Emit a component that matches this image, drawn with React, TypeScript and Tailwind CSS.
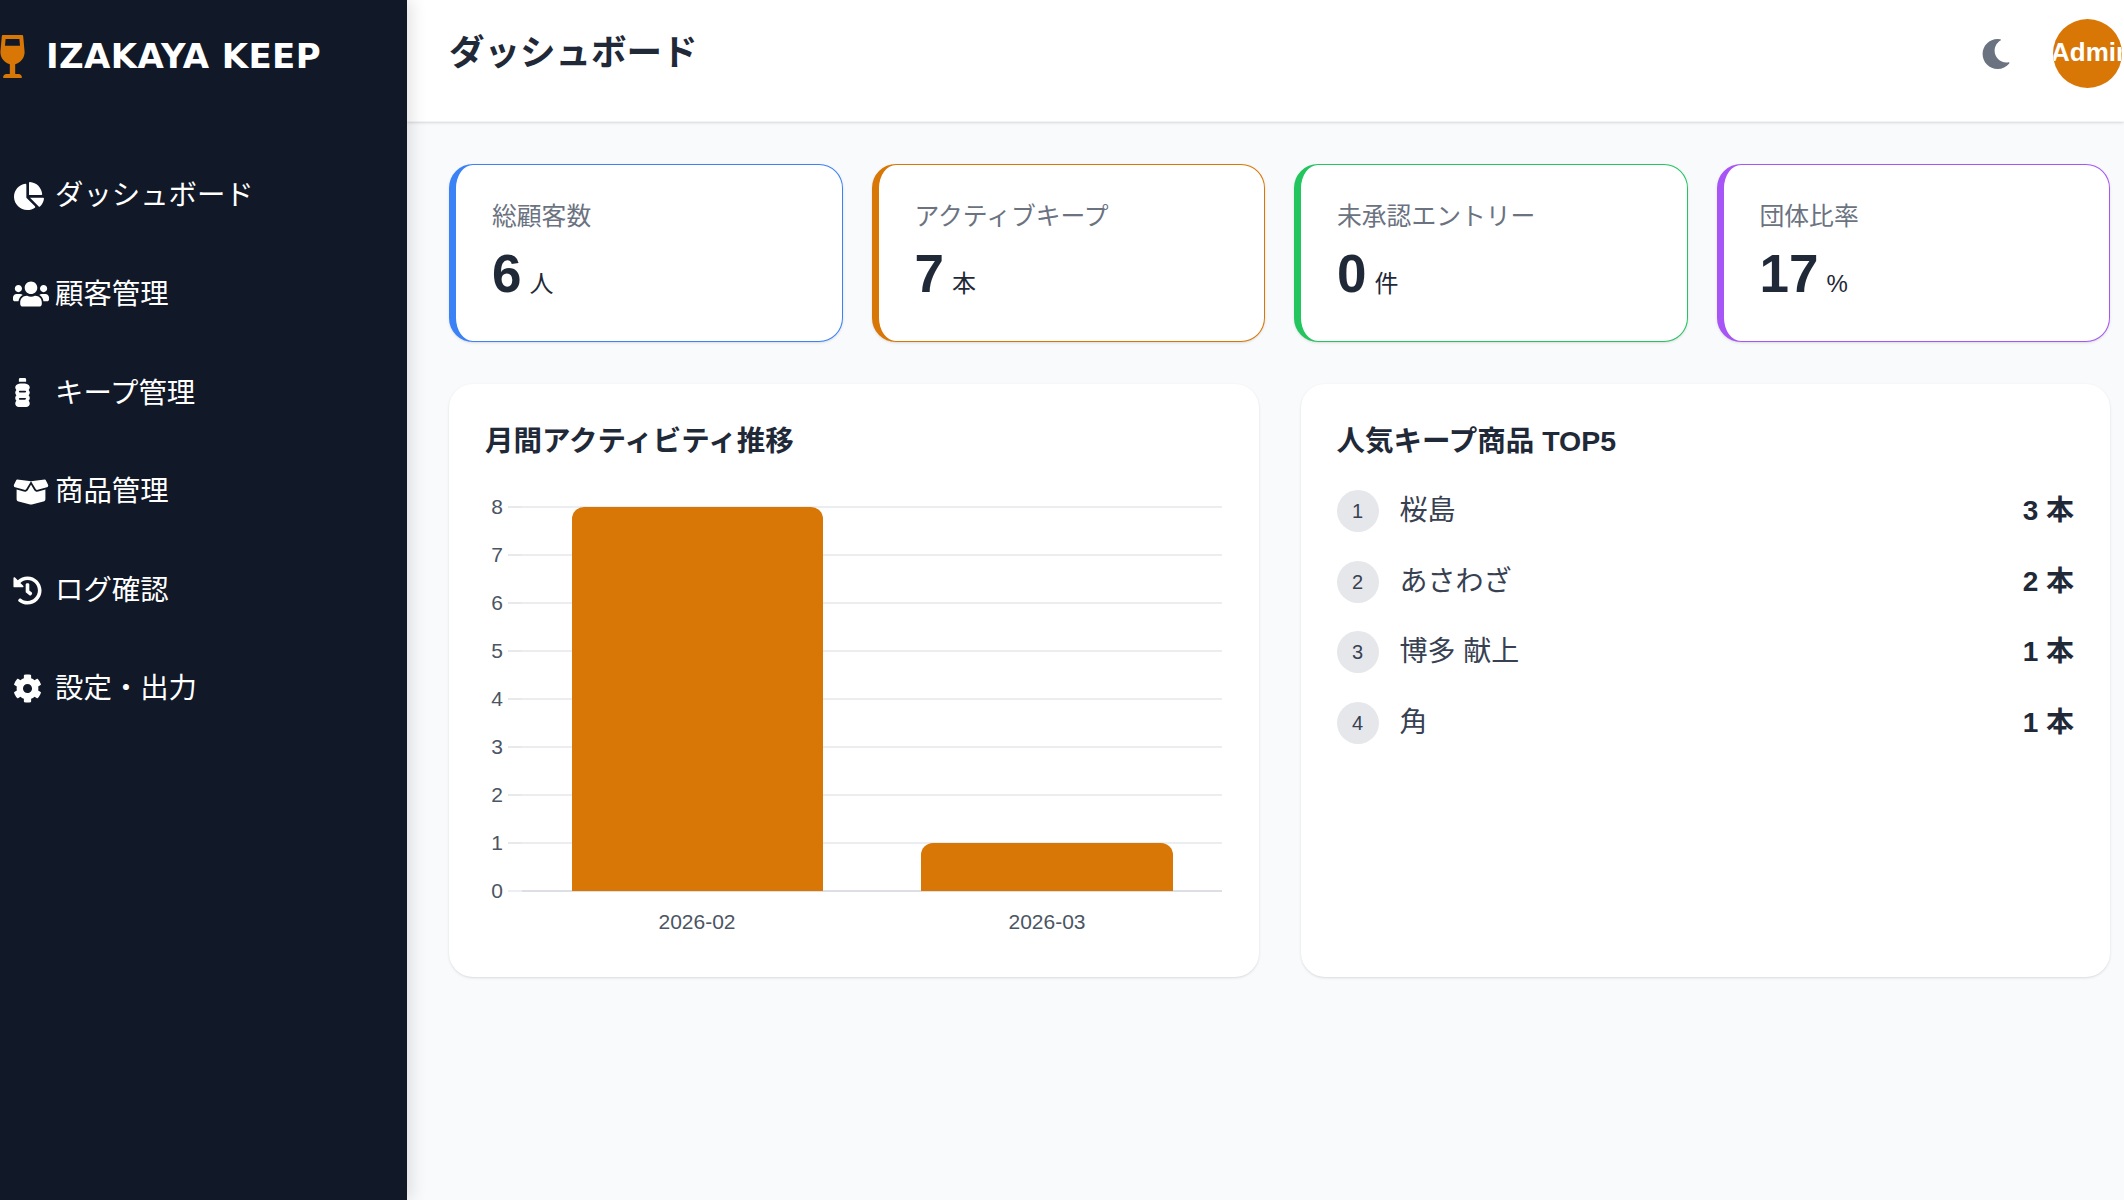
import { FaBottleWater, FaBoxOpen } from 'react-icons/fa6';
import { FaChartPie, FaCog, FaHistory, FaMoon, FaUsers, FaWineGlassAlt } from 'react-icons/fa';

const nav = [
  { label: 'ダッシュボード', icon: FaChartPie, cls: 'w-[30px] h-[30px] ml-[1px]' },
  { label: '顧客管理', icon: FaUsers, cls: 'w-[36px] h-[36px]' },
  { label: 'キープ管理', icon: FaBottleWater, cls: 'w-[29px] h-[29px] -ml-[5px]' },
  { label: '商品管理', icon: FaBoxOpen, cls: 'w-[36px] h-[36px]' },
  { label: 'ログ確認', icon: FaHistory, cls: 'w-[29px] h-[29px]' },
  { label: '設定・出力', icon: FaCog, cls: 'w-[29px] h-[29px]' },
];

const stats = [
  { label: '総顧客数', value: '6', unit: '人', border: 'border-[#3b82f6]' },
  { label: 'アクティブキープ', value: '7', unit: '本', border: 'border-[#d97706]' },
  { label: '未承認エントリー', value: '0', unit: '件', border: 'border-[#22c55e]' },
  { label: '団体比率', value: '17', unit: '%', border: 'border-[#a855f7]' },
];

const ranking = [
  { name: '桜島', count: '3 本' },
  { name: 'あさわざ', count: '2 本' },
  { name: '博多 献上', count: '1 本' },
  { name: '角', count: '1 本' },
];

const font = "font-['Liberation_Sans','Noto_Sans_CJK_JP',sans-serif]";

function Chart() {
  const ticks = [0, 1, 2, 3, 4, 5, 6, 7, 8];
  const y = (v: number) => 396 - v * 48;
  return (
    <svg width="737" height="445" className="block" fontFamily="'Liberation Sans', sans-serif" fontSize="21">
      {ticks.map((t) => (
        <g key={t}>
          <line x1={t === 0 ? 37 : 23} x2={737} y1={y(t)} y2={y(t)} stroke={t === 0 ? '#d1d5db' : '#e5e7eb'} strokeWidth="1.4" />
          <line x1={23} x2={37} y1={y(t)} y2={y(t)} stroke="#e5e7eb" strokeWidth="1.4" />
          <text x={18} y={y(t) + 7} textAnchor="end" fill="#4b5563">{t}</text>
        </g>
      ))}
      <path d={`M87 ${y(0)} V${y(8) + 12} a12 12 0 0 1 12 -12 H326 a12 12 0 0 1 12 12 V${y(0)} Z`} fill="#d97706" />
      <path d={`M436 ${y(0)} V${y(1) + 12} a12 12 0 0 1 12 -12 H676 a12 12 0 0 1 12 12 V${y(0)} Z`} fill="#d97706" />
      <text x={212} y={434} textAnchor="middle" fill="#4b5563">2026-02</text>
      <text x={562} y={434} textAnchor="middle" fill="#4b5563">2026-03</text>
    </svg>
  );
}

export default function App() {
  return (
    <div className={`flex h-screen overflow-hidden bg-[#f9fafb] ${font}`}>
      {/* Sidebar */}
      <aside className="w-[407px] shrink-0 bg-[#111827] text-white shadow-[4px_0_16px_rgba(0,0,0,0.12)] z-10">
        <div className="flex items-center h-[112px] gap-[12px]">
          <FaWineGlassAlt className="text-[#d97706] w-[43px] h-[43px] -ml-[9px] shrink-0" />
          <span className="font-['DejaVu_Sans'] font-bold text-[34px] tracking-[0.4px]">IZAKAYA KEEP</span>
        </div>
        <nav className="pt-[34.5px]">
          {nav.map((item) => (
            <div key={item.label} className="flex items-center h-[98.6px] pl-[13px] text-[28.4px]">
              <span className="w-[42px] shrink-0">
                <item.icon className={item.cls} />
              </span>
              {item.label}
            </div>
          ))}
        </nav>
      </aside>

      <main className="flex-1 min-w-0">
        {/* Header */}
        <header className="flex items-center justify-between h-[122px] pb-[14px] pl-[42px] pr-[2px] bg-white border-b border-[#f3f4f6] shadow-sm">
          <h1 className="text-[35.5px] font-bold text-[#1f2937]">ダッシュボード</h1>
          <div className="flex items-center gap-[42px]">
            <FaMoon className="w-[30px] h-[30px] text-[#6b7280]" />
            <div className="w-[69px] h-[69px] rounded-full bg-[#d97706] text-white font-bold text-[26px] leading-[67px] overflow-hidden">
              <span className="-ml-[2px]">Admin</span>
            </div>
          </div>
        </header>

        <div className="pl-[42px] pr-[14px] pt-[42px]">
          {/* Stat cards */}
          <div className="grid grid-cols-4 gap-[29px]">
            {stats.map((s) => (
              <div key={s.label} className={`h-[178px] rounded-[24px] bg-white border border-l-[7px] pl-[36px] pt-[34px] shadow-sm ${s.border}`}>
                <p className="text-[24.8px] leading-[35px] text-[#6b7280]">{s.label}</p>
                <p className="mt-[8px] text-[#1f2937] leading-[64px]">
                  <span className="text-[53px] font-bold">{s.value}</span>
                  <span className="text-[24px] ml-[8px]">{s.unit}</span>
                </p>
              </div>
            ))}
          </div>

          {/* Lower panels */}
          <div className="grid grid-cols-2 gap-[42px] mt-[42px]">
            <section className="h-[593px] rounded-[24px] bg-white shadow-sm px-[36px] pt-[37px]">
              <h2 className="text-[28.5px] leading-[40px] font-bold text-[#1f2937]">月間アクティビティ推移</h2>
              <div className="mt-[34px]">
                <Chart />
              </div>
            </section>
            <section className="h-[593px] rounded-[24px] bg-white shadow-sm px-[36px] pt-[37px]">
              <h2 className="text-[28.5px] leading-[40px] font-bold text-[#1f2937]">人気キープ商品 TOP5</h2>
              <ul className="mt-[15px]">
                {ranking.map((r, i) => (
                  <li key={r.name} className="flex items-center justify-between h-[70.5px]">
                    <div className="flex items-center gap-[21px]">
                      <span className="flex items-center justify-center w-[42px] h-[42px] rounded-full bg-[#e5e7eb] text-[20px] text-[#374151]">{i + 1}</span>
                      <span className="text-[28px] text-[#374151]">{r.name}</span>
                    </div>
                    <span className="text-[28px] font-bold text-[#1f2937]">{r.count}</span>
                  </li>
                ))}
              </ul>
            </section>
          </div>
        </div>
      </main>
    </div>
  );
}
